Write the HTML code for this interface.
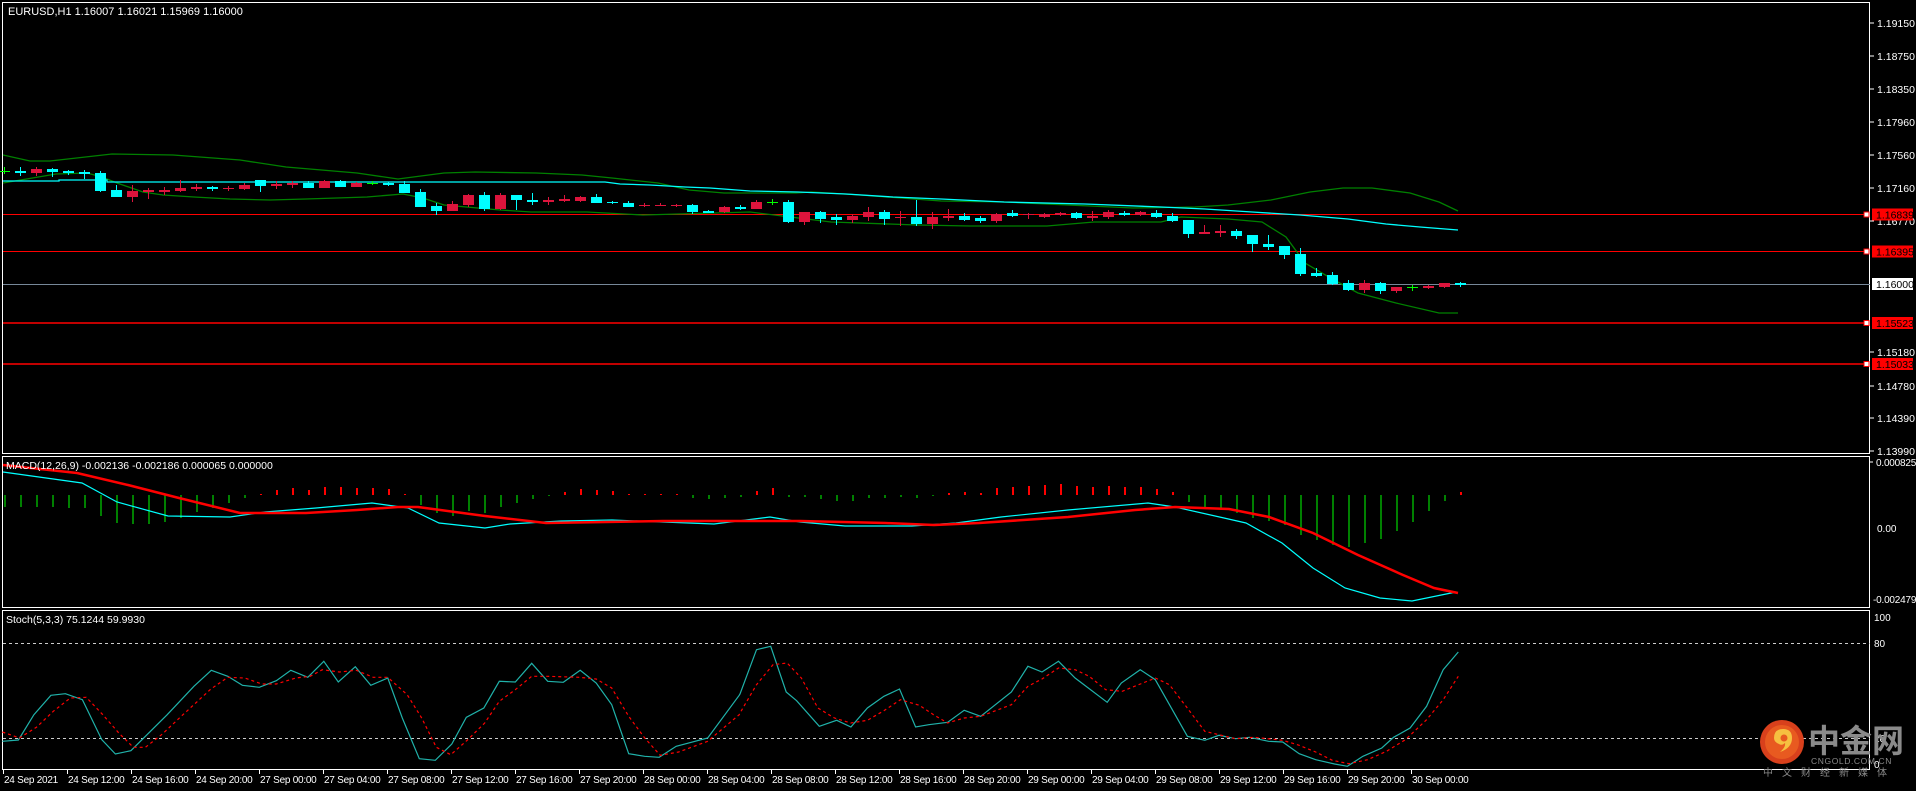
<!DOCTYPE html>
<html><head><meta charset="utf-8"><style>
html,body{margin:0;padding:0;background:#000;width:1916px;height:791px;overflow:hidden}
svg{display:block}
text{font-family:"Liberation Sans","Noto Sans CJK SC",sans-serif}
</style></head><body>
<svg id="c" width="1916" height="791" viewBox="0 0 1916 791" xmlns="http://www.w3.org/2000/svg">
<rect width="1916" height="791" fill="#000"/>
<rect x="2.5" y="2.5" width="1867" height="451" fill="none" stroke="#fff" stroke-width="1"/>
<rect x="2.5" y="456.5" width="1867" height="151" fill="none" stroke="#fff" stroke-width="1"/>
<rect x="2.5" y="610.5" width="1867" height="159" fill="none" stroke="#fff" stroke-width="1"/>
<g id="g"></g>
<text x="8" y="15" font-size="11" fill="#fff">EURUSD,H1  1.16007 1.16021 1.15969 1.16000</text>
<text x="6" y="469" font-size="10.5" fill="#fff">MACD(12,26,9) -0.002136 -0.002186 0.000065 0.000000</text>
<text x="6" y="623" font-size="10.5" fill="#fff">Stoch(5,3,3) 75.1244 59.9930</text>
<circle cx="1782" cy="742" r="22" fill="#d8401c"/>
<circle cx="1782" cy="742" r="17" fill="#e85a20"/>
<path d="M1774 738 q0 -9 9 -9 q9 0 9 9 q0 10 -12 14 q6 -5 5 -9 q-3 3 -6 1 q-5 -2 -5 -6z" fill="#f6c040"/>
<circle cx="1784" cy="738" r="3.5" fill="#e85a20"/>
<text x="1808" y="752" font-size="32" font-weight="bold" fill="#8a8a8a">中金网</text>
<text x="1811" y="764" font-size="8.5" fill="#8a8a8a" letter-spacing="0.6">CNGOLD.COM.CN</text>
<text x="1763" y="776" font-size="10" fill="#8a8a8a" letter-spacing="9">中文财经新媒体</text>
</svg>
<script>
var g=document.getElementById('g'),h='';
function ln(x1,y1,x2,y2,c,w,extra){h+='<line x1="'+x1+'" y1="'+y1+'" x2="'+x2+'" y2="'+y2+'" stroke="'+c+'" stroke-width="'+(w||1)+'" '+(extra||'')+'/>';}
function pl(pts,c,w,extra){h+='<polyline fill="none" stroke="'+c+'" stroke-width="'+(w||1)+'" points="'+pts.map(function(p){return p[0].toFixed(1)+','+p[1].toFixed(1)}).join(' ')+'" '+(extra||'')+'/>';}
function tx(x,y,s,c,sz,ls){h+='<text x="'+x+'" y="'+y+'" font-size="'+(sz||11)+'" fill="'+(c||'#fff')+'"'+(ls?' letter-spacing="'+ls+'"':'')+'>'+s+'</text>';}
var ax=[[1.19150,23],[1.18750,56],[1.18350,89],[1.17960,122],[1.17560,155],[1.17160,188],[1.16770,221],[1.15180,352],[1.14780,386],[1.14390,418],[1.13990,451]];
ax.forEach(function(a){ln(1870,a[1],1874,a[1],'#fff');tx(1877,a[1]+4,a[0].toFixed(5),'#fff',10.5);});
ln(3,284.5,1870,284.5,'#778899',1);
[[214.5,1,'1.16839'],[251.5,1,'1.16395'],[323,1.5,'1.15523'],[364,1.5,'1.15033']].forEach(function(l){
 ln(3,l[0],1866,l[0],'#ff0000',l[1]);
 h+='<rect x="1864" y="'+(l[0]-2.5)+'" width="5" height="5" fill="#fff" stroke="#ff0000"/>';
 h+='<rect x="1872" y="'+(l[0]-6)+'" width="41" height="12" fill="#ff0000"/>';
 tx(1876,l[0]+4,l[2],'#000',10.5);
});
h+='<rect x="1872" y="278" width="41" height="12" fill="#fff"/>';tx(1876,288,'1.16000','#000',10.5);
var up=[[3,155],[30,161],[50,161],[112,154],[173,155],[240,160],[286,167],[357,173],[398,179],[444,173],[475,172],[536,173],[582,175],[612,178],[658,183],[689,190],[724,193],[796,193],[812,192],[860,195],[941,201],[1004,202],[1133,208],[1195,207],[1228,205],[1271,200],[1310,192],[1343,188],[1372,188],[1410,193],[1439,202],[1458,211]];
var mid=[[3,181],[59,181],[59,180],[107,180],[107,182],[538,182],[605,182],[620,184],[650,185],[685,187],[710,188],[750,191],[798,192],[846,194],[893,197],[941,199],[1004,202],[1085,204],[1161,207],[1205,209],[1252,212],[1300,215],[1348,219],[1386,224],[1420,227],[1458,230]];
var lo=[[3,183],[56,174],[87,173],[102,177],[117,183],[143,192],[163,195],[194,197],[230,199],[270,200],[306,199],[367,197],[403,194],[423,198],[444,205],[500,210],[531,212],[587,212],[643,215],[750,212],[831,222],[917,225],[970,226],[1047,226],[1094,222],[1161,222],[1181,217],[1228,219],[1262,222],[1286,237],[1305,263],[1334,280],[1358,293],[1396,303],[1439,313],[1458,313]];
pl(up,'#008000',1.3);pl(lo,'#008000',1.3);pl(mid,'#00ffff',1.3);
var C=[['d',171,171,167,174],['b',171,173,167,176],['r',169,173,167,176],['b',169,172,168,177],['b',171,173,170,175],['b',172,174,170,179],['b',173,191,171,192],['b',190,197,185,197],['r',191,197,185,202],['r',190,192,188,199],['r',190,192,187,195],['r',188,191,180,192],['r',187,189,184,191],['b',187,189,186,191],['r',188,189,186,191],['r',185,189,183,190],['b',180,186,180,192],['r',184,186,181,189],['r',183,185,181,188],['b',183,188,181,188],['r',181,188,180,188],['b',181,187,180,187],['r',183,187,182,187],['d',183,183,181,185],['b',183,185,182,186],['b',184,193,181,193],['b',192,207,189,207],['b',206,211,203,215],['r',204,211,201,211],['r',195,205,194,207],['b',195,209,192,211],['r',195,209,193,210],['b',195,200,195,210],['b',200,202,193,205],['r',200,202,197,205],['r',199,201,195,202],['r',197,201,196,202],['b',197,203,194,203],['b',202,203,201,204],['b',203,207,201,207],['r',205,206,203,207],['r',205,206,203,206],['r',205,206,204,207],['b',205,212,204,214],['b',211,213,210,213],['r',207,212,206,213],['b',207,209,205,210],['r',202,209,200,209],['d',202,202,199,205],['b',202,222,200,223],
['r',212,222,212,225],['b',212,219,211,223],['b',217,220,214,225],['r',216,220,214,223],['r',212,217,207,221],['b',212,219,210,225],['r',217,217,211,226],['b',217,224,200,226],['r',217,224,212,229],['r',216,218,209,221],['b',216,220,213,221],['b',218,221,216,223],['r',214,221,213,223],['b',213,216,210,217],['r',214,214,213,219],['r',214,217,213,218],['r',213,215,212,216],['b',213,218,212,219],['r',216,218,211,221],['r',212,217,210,219],['b',213,215,211,216],['r',212,215,211,216],['b',213,217,210,218],['b',216,221,213,222],['b',220,234,220,238],['r',232,234,225,234],['r',231,233,225,237],['b',231,236,229,239],['b',235,244,235,252],['b',244,247,235,250],['b',246,255,246,259],['b',254,274,248,276],['b',273,276,268,277],['b',275,284,272,285],['b',283,290,280,291],['r',283,290,280,293],['b',283,291,282,294],['r',287,291,287,293],['d',287,287,285,291],['r',286,288,285,289],['r',283,287,283,288],['b',283,285,282,287]];
C.forEach(function(c,i){var x=4+16*i;var col=c[0]=='b'?'#00ffff':c[0]=='r'?'#dc143c':'#00ff00';
 ln(x+0.5,c[3],x+0.5,c[4],col,1);
 var hgt=Math.max(c[2]-c[1],1);
 if(c[0]=='d'){ln(x-5,c[1]+0.5,x+6,c[1]+0.5,col,1);}
 else h+='<rect x="'+(x-5)+'" y="'+c[1]+'" width="11" height="'+hgt+'" fill="'+col+'"/>';
});
var hist=[507,507,507,507,508,508,516,523,524,524,522,518,512,508,503,498,494,490,488,490,487,487,488,488,489,494,505,513,516,511,513,507,503,499,496,492,489,490,491,494,494,494,494,498,499,498,497,491,488,497,497,499,501,501,498,498,497,498,496,493,492,493,488,487,486,485,484,486,487,486,487,487,489,492,502,508,510,513,518,521,525,535,540,545,547,543,539,531,522,511,501,492];
hist.forEach(function(v,i){var x=4+16*i;var col=v>495?'#008000':'#ff0000';h+='<rect x="'+x+'" y="'+Math.min(v,495)+'" width="2" height="'+Math.max(Math.abs(v-495),1)+'" fill="'+col+'"/>';});
var sig=[[3,465],[77,473],[128,485],[179,498],[240,513],[306,513],[357,510],[398,507],[418,507],[485,516],[546,523],[663,521],[800,521],[885,523],[934,525],[979,523],[1068,517],[1135,510],[1175,507],[1229,509],[1269,517],[1313,533],[1358,555],[1403,575],[1434,588],[1458,593]];
var mn=[[3,472],[82,483],[117,502],[168,516],[230,517],[265,512],[316,508],[372,503],[408,508],[439,523],[485,528],[510,524],[561,521],[612,520],[663,522],[714,524],[770,517],[800,522],[845,526],[912,526],[956,523],[1001,517],[1068,510],[1148,503],[1175,507],[1224,518],[1246,523],[1282,543],[1313,568],[1345,588],[1380,598],[1412,601],[1456,592]];
pl(mn,'#00ffff',1.2);pl(sig,'#ff0000',2.5);
tx(1873,603,'-0.002479','#fff',10,'-0.2');tx(1876,466,'0.000825','#fff',10,'-0.2');tx(1877,532,'0.00','#fff',10);
ln(1870,462,1873,462,'#fff');
ln(3,643.5,1870,643.5,'#ccc',1,'stroke-dasharray="3,3"');ln(3,738.5,1870,738.5,'#ccc',1,'stroke-dasharray="3,3"');
tx(1874,621,'100','#fff',10);tx(1874,647,'80','#fff',10);tx(1874,742,'20','#fff',10);tx(1874,768,'0','#fff',10);
function cv(a,sx,ox){return a.map(function(p){return [p[0]/sx+ox,p[1]/3+608];});}
var m1=[[5,400],[38,396],[70,320],[105,262],[135,257],[170,275],[210,395],[238,438],[270,428],[345,320],[400,235],[436,187],[470,205],[500,232],[535,238],[570,218],[600,187],[635,208],[668,160],[698,222],[733,176],[765,232],[800,210],[830,330],[865,452],[898,457],[932,408],[962,328],[998,300],[1030,220],[1063,222],[1097,166],[1130,220],[1162,223],[1197,187],[1230,225],[1262,290],[1297,437],[1330,445],[1360,448],[1395,415],[1460,390],[1525,262]];
var m2=[[0,258],[35,125],[65,115],[98,252],[120,278],[168,355],[205,337],[235,357],[270,300],[305,265],[338,243],[372,357],[400,350],[440,343],[475,307],[510,325],[575,252],[610,175],[640,192],[675,160],[710,210],[778,283],[808,225],[848,185],[880,215],[948,385],[985,397],[1015,382],[1050,392],[1080,388],[1120,400],[1150,402],[1185,437],[1220,455],[1260,468],[1287,475],[1320,445],[1360,420],[1385,388],[1420,360],[1455,295],[1490,185],[1522,132]];
var s1=[[5,372],[40,390],[75,358],[110,310],[145,270],[178,268],[212,320],[245,375],[275,418],[300,418],[335,378],[370,330],[435,243],[470,208],[505,210],[540,228],[570,228],[610,210],[640,205],[665,185],[700,192],[735,187],[770,208],[800,208],[840,260],[870,330],[900,418],[930,440],[965,395],[1000,345],[1030,280],[1063,245],[1097,205],[1130,205],[1195,208],[1230,213],[1262,240],[1297,325],[1330,390],[1362,442],[1400,432],[1460,400],[1525,320]];
var s2=[[0,315],[35,230],[70,170],[100,165],[130,210],[165,300],[200,330],[235,345],[270,337],[305,308],[340,275],[380,292],[410,320],[440,345],[475,330],[510,325],[575,290],[610,235],[640,213],[675,180],[710,185],[740,205],[775,245],[810,250],[880,210],[910,230],[945,295],[985,370],[1050,392],[1090,388],[1150,397],[1185,412],[1220,432],[1255,457],[1290,467],[1330,455],[1370,430],[1410,395],[1455,335],[1490,275],[1522,205]];
pl(cv(m1,2.063,0).concat(cv(m2,2.119,740)),'#20b2aa',1.2);
pl(cv(s1,2.063,0).concat(cv(s2,2.119,740)),'#ff0000',1.2,'stroke-dasharray="3,3"');
var L=['24 Sep 2021','24 Sep 12:00','24 Sep 16:00','24 Sep 20:00','27 Sep 00:00','27 Sep 04:00','27 Sep 08:00','27 Sep 12:00','27 Sep 16:00','27 Sep 20:00','28 Sep 00:00','28 Sep 04:00','28 Sep 08:00','28 Sep 12:00','28 Sep 16:00','28 Sep 20:00','29 Sep 00:00','29 Sep 04:00','29 Sep 08:00','29 Sep 12:00','29 Sep 16:00','29 Sep 20:00','30 Sep 00:00'];
L.forEach(function(s,k){var x=3+64*k;ln(x+0.5,770,x+0.5,774,'#fff');tx(x+1,783,s,'#fff',10,'-0.25');});
g.innerHTML=h;
</script>
</body></html>
